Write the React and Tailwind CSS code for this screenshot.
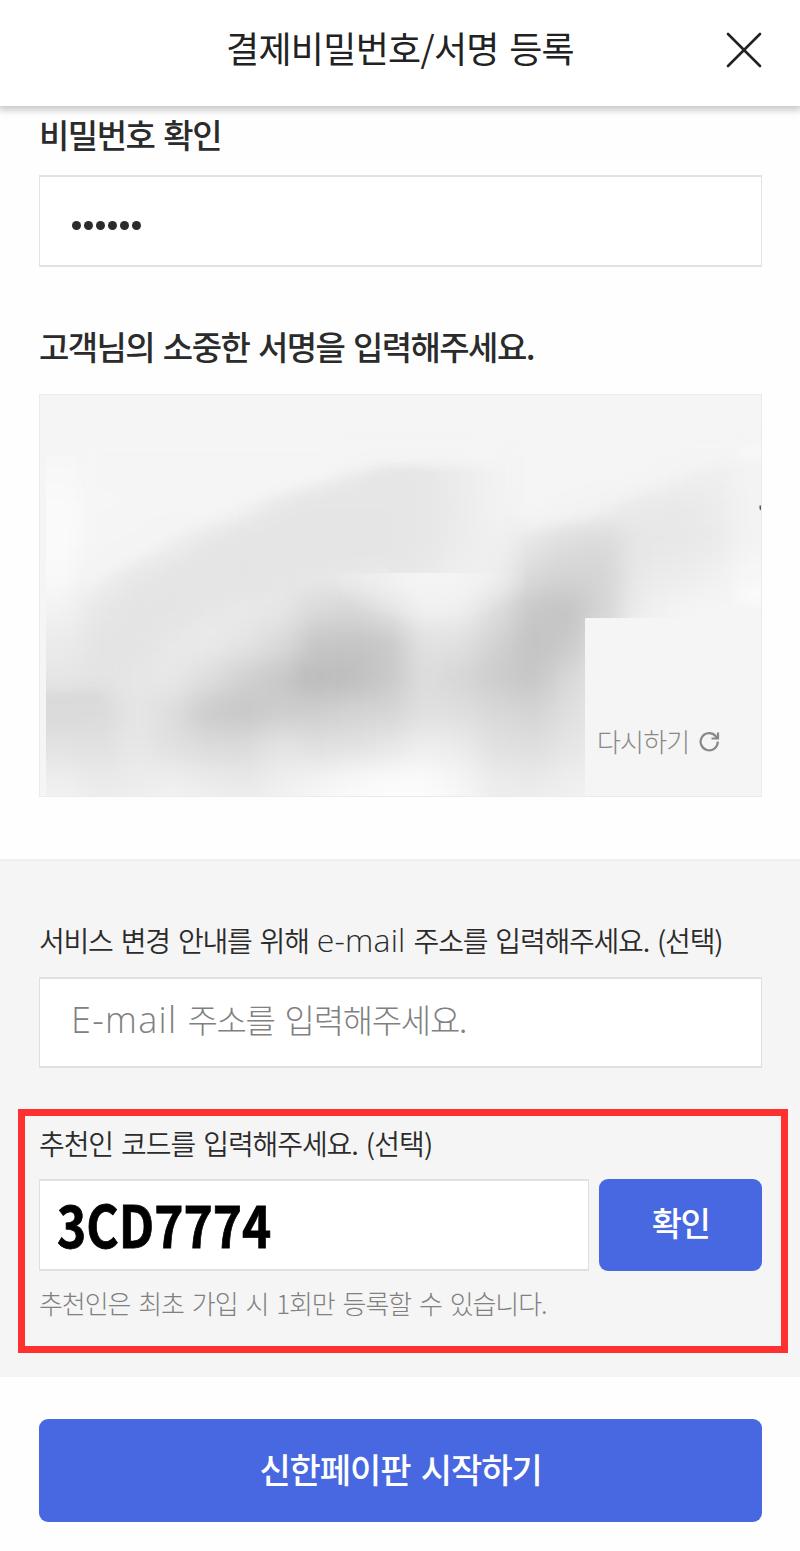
import React from 'react';

// Grey levels of the smudged signature, one value per 36x34 cell
const SHADES = [
  'f8 f6 f6 f6 f6 f6 f6 f4 ee e7 e7 ed f3 f5 f5 f5 f4 f1 ee f3',
  'fa f7 f6 f6 f5 f1 ea e6 e6 e6 e7 ec f3 f4 f2 ee ea e8 eb f3',
  'fa f6 f4 ee e8 e5 e5 e5 e6 e6 e7 ed f0 e6 dd da e6 e8 ea f3',
  'f9 ef e8 e5 e4 e4 e7 e8 ea ec f2 f3 ed da d3 d5 ea ec f0 f7',
  'f2 e7 e3 e4 e8 e9 e6 da d6 e0 f0 ee dd c8 c4 d5 ee f4 f5 f5',
  'eb e4 e3 e8 ea e4 da c8 c4 c8 e1 e0 d2 c3 c9 e0 f5 f5 f5 f5',
  'e6 e3 e7 e8 de d1 c8 b8 be c8 dd d6 cc c6 d8 e6 f5 f5 f5 f5',
  'd9 da e5 dd cb c7 cd ce d3 d5 e0 de d8 d4 df e6 f5 f5 f5 f5',
  'e2 e0 e8 e0 db da e4 df e1 e6 ee eb e0 de e5 ea f5 f5 f5 f5',
  'ee e9 ec ee eb e8 ee f3 f8 fb fb f5 eb ea ee f0 f5 f5 f5 f5',
  'f4 f0 f2 f5 f3 f0 f4 f8 fb fd fd f8 f0 f0 f2 f4 f5 f5 f5 f5',
].map(row => row.split(' '));

function Label({ className, children }) {
  return <div className={`whitespace-nowrap text-[#2b2b2b] ${className}`}>{children}</div>;
}

function SignatureStrokes() {
  return (
    <svg className="block w-full h-full" viewBox="40 395 721 401" preserveAspectRatio="none">
      <defs>
        <clipPath id="area">
          <path d="M46 457H84V395H761V618H585V796H46Z" />
        </clipPath>
        <filter id="soft" filterUnits="userSpaceOnUse" x="0" y="380" width="820" height="480" colorInterpolationFilters="sRGB">
          <feGaussianBlur stdDeviation="13" />
        </filter>
        <filter id="thin" filterUnits="userSpaceOnUse" x="0" y="380" width="820" height="480" colorInterpolationFilters="sRGB">
          <feGaussianBlur stdDeviation="6" />
        </filter>
        <linearGradient id="band" x1="0" x2="1">
          <stop offset="0" stopColor="#e6e6e6" />
          <stop offset="0.3" stopColor="#e7e7e7" />
          <stop offset="1" stopColor="#f4f4f4" stopOpacity="0" />
        </linearGradient>
        <radialGradient id="under" cx="0.5" cy="0" r="0.5" gradientTransform="translate(0 0) scale(1 2)">
          <stop offset="0" stopColor="#f5f5f5" stopOpacity="0.9" />
          <stop offset="1" stopColor="#f3f3f3" stopOpacity="0" />
        </radialGradient>
        <linearGradient id="streak" x1="0" y1="0" x2="0" y2="1">
          <stop offset="0" stopColor="#c8c8c8" stopOpacity="0" />
          <stop offset="0.4" stopColor="#c4c4c4" stopOpacity="0.35" />
          <stop offset="1" stopColor="#d8d8d8" stopOpacity="0" />
        </linearGradient>
      </defs>
      <g clipPath="url(#area)">
        <g filter="url(#soft)" shapeRendering="crispEdges">
          <rect x="0" y="380" width="820" height="80" fill="#f5f5f5" />
          {SHADES.map((row, r) =>
            row.map((v, c) => (
              <rect
                key={`${r}-${c}`}
                x={c === 0 ? 0 : 46 + c * 36}
                y={457 + r * 34}
                width={c === 0 ? 82 : c === 19 ? 80 : 36}
                height={r === 10 ? 70 : 34}
                fill={`#${v}${v}${v}`}
              />
            ))
          )}
        </g>
        {/* upper arc and the flat edge right of it */}
        <path d="M86 440H500V462L380 466C290 478 190 520 86 590Z" fill="#f5f5f5" opacity="0.8" filter="url(#thin)" />
        <path d="M110 625C180 550 270 500 385 472H420V566C330 570 230 590 120 660Z" fill="#e5e5e5" opacity="0.7" filter="url(#thin)" />
        <path d="M522 440H761V458C700 468 640 490 590 516L522 530Z" fill="#f5f5f5" opacity="0.6" filter="url(#thin)" />
        <rect x="388" y="471" width="140" height="102" fill="url(#band)" opacity="0.7" />
        <rect x="325" y="573" width="205" height="50" fill="url(#under)" />
        <rect x="308" y="610" width="28" height="105" fill="url(#streak)" opacity="0.6" />
        <rect x="525" y="530" width="34" height="265" fill="url(#streak)" opacity="0.4" />
        <path d="M40 694H106V702H40Z" fill="#d0d0d0" opacity="0.5" filter="url(#thin)" />
        <path d="M740 448H775V458H740ZM735 585H775V604H735Z" fill="#fbfbfb" opacity="0.7" filter="url(#thin)" />
      </g>
      <path d="M761 505.500H759.500V509L761 510.500Z" fill="#555" />
    </svg>
  );
}

export default function App() {
  return (
    <div className="w-[800px] h-[1551px] bg-[#fefefe] overflow-hidden font-['Noto_Sans_CJK_KR',sans-serif] flex flex-col">
      {/* Header */}
      <header className="h-[106px] shrink-0 bg-white shadow-[0_2px_7px_2px_rgba(0,0,0,0.22)] grid grid-cols-[1fr_auto_1fr] items-center pb-[7px]">
        <h1 className="col-start-2 mb-[6px] whitespace-nowrap text-[36px] leading-[50px] tracking-[-0.7px] [word-spacing:3px] text-[#222]">결제비밀번호/서명 등록</h1>
        <button className="justify-self-end mr-[38px]" aria-label="닫기">
          <svg className="block" width="36" height="36" viewBox="0 0 36 36" fill="none" stroke="#222" strokeWidth="2.600" strokeLinecap="round">
            <path d="M2 2L34 34M34 2L2 34" />
          </svg>
        </button>
      </header>

      {/* Password and signature */}
      <section className="pl-[39px] pr-[38px] h-[753px] shrink-0">
        <Label className="pt-[8px] text-[33px] leading-[40px] font-medium tracking-[-1.5px] [word-spacing:3px]">비밀번호 확인</Label>
        <div className="mt-[21px] h-[92px] border-x border-y-2 border-[#e2e2e2] bg-white flex items-center gap-[3px] pl-8 pt-2">
          {[0, 1, 2, 3, 4, 5].map(i => (
            <span key={i} className="w-[9px] h-[9px] rounded-full bg-[#2b2b2b]"></span>
          ))}
        </div>
        <Label className="mt-[59px] text-[33px] leading-[40px] font-medium tracking-[-1.6px] [word-spacing:3px]">고객님의 소중한 서명을 입력해주세요.</Label>
        <div className="mt-[28px] h-[403px] border border-[#ebebeb] bg-[#f5f5f5] relative">
          <SignatureStrokes />
          <button className="absolute left-[557px] top-[326px] flex items-center gap-[10px] text-[#888]">
            <span className="whitespace-nowrap text-[26px] leading-[40px] font-light tracking-[-0.8px]">다시하기</span>
            <svg width="21" height="21" viewBox="0 0 21 21" fill="none" stroke="currentColor" strokeWidth="2.200">
              <path d="M18.800 10.500A8.600 8.600 0 1 1 16.800 5.200L18.500 7M19 1.500V7.500H12.500" />
            </svg>
          </button>
        </div>
      </section>

      {/* Optional fields */}
      <section className="h-[518px] shrink-0 bg-[#f5f5f5] border-t-2 border-[#f0f0f0] px-[18px]">
        <div className="px-[21px] pt-[59px]">
          <Label className="h-[40px] text-[28px] leading-[40px] font-[350] tracking-[-1.200px] [word-spacing:3px]">
            서비스 변경 안내를 위해 <span className="font-['Open_Sans',sans-serif] text-[32px] leading-none font-light tracking-[0.200px]">e-mail</span> 주소를 입력해주세요. (선택)
          </Label>
          <div className="mt-[17px] w-[723px] h-[91px] border-x border-y-2 border-[#e0e0e0] bg-white pl-[31px] text-[33px] leading-[80px] font-light tracking-[-1.300px] [word-spacing:4px] text-[#808080]">
            <span className="font-['Open_Sans',sans-serif] text-[36px] leading-none tracking-[1.300px]">E-mail</span> 주소를 입력해주세요.
          </div>
        </div>
        <div className="mt-[41px] w-[770px] h-[244px] border-[7px] border-[#ff3030] pl-[14px] pt-[7px]">
          <Label className="text-[28px] leading-[40px] font-[350] tracking-[-1.100px] [word-spacing:3px]">
            추천인 코드를 입력해주세요. <span className="tracking-[-0.900px]">(선택)</span>
          </Label>
          <div className="mt-4 flex gap-[10px]">
            <div className="w-[550px] h-[92px] border-x border-y-2 border-[#e0e0e0] bg-white pl-[17px] text-[58px] leading-[84px] font-bold text-black">
              <span className="inline-block origin-left scale-x-[0.855] [-webkit-text-stroke:0.8px_black]">3CD7774</span>
            </div>
            <button className="w-[163px] h-[92px] rounded-[9px] bg-[#4768e1] text-white text-[33px] leading-[40px] pb-[6px] font-medium tracking-[-1.500px]">확인</button>
          </div>
          <div className="mt-[12px] whitespace-nowrap text-[26px] leading-[40px] font-light tracking-[-1.100px] [word-spacing:3.300px] text-[#808080]">추천인은 최초 가입 시 1회만 등록할 수 있습니다.</div>
        </div>
      </section>

      {/* Submit */}
      <div className="pl-[39px] pr-[38px] pt-[42px]">
        <button className="w-full h-[103px] rounded-[9px] bg-[#4768e1] text-white text-[34px] leading-[40px] pb-1 font-medium tracking-[-1.100px] [word-spacing:4px]">신한페이판 시작하기</button>
      </div>
    </div>
  );
}
